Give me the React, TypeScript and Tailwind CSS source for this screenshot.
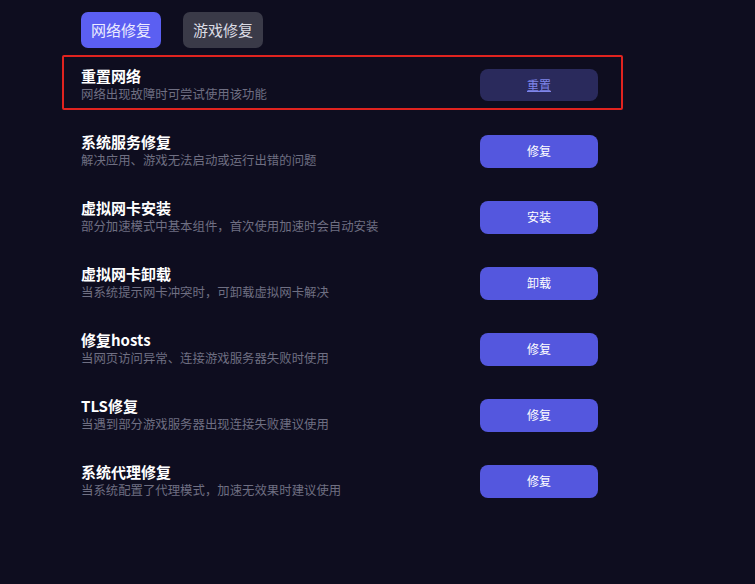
const rows = [
  { title: '重置网络', desc: '网络出现故障时可尝试使用该功能', action: '重置', disabled: true },
  { title: '系统服务修复', desc: '解决应用、游戏无法启动或运行出错的问题', action: '修复' },
  { title: '虚拟网卡安装', desc: '部分加速模式中基本组件，首次使用加速时会自动安装', action: '安装' },
  { title: '虚拟网卡卸载', desc: '当系统提示网卡冲突时，可卸载虚拟网卡解决', action: '卸载' },
  { title: '修复hosts', desc: '当网页访问异常、连接游戏服务器失败时使用', action: '修复' },
  { title: 'TLS修复', desc: '当遇到部分游戏服务器出现连接失败建议使用', action: '修复' },
  { title: '系统代理修复', desc: '当系统配置了代理模式，加速无效果时建议使用', action: '修复' },
]

function RepairRow({ title, desc, action, disabled }: { title: string; desc: string; action: string; disabled?: boolean }) {
  return (
    <div className="relative flex h-[66px] items-center pl-[81px]">
      {disabled && (
        <div className="pointer-events-none absolute left-[62px] top-[3px] h-[55px] w-[561px] rounded-[2px] border-2 border-[#e0231f]" />
      )}
      <div className="flex w-[399px] flex-col pb-[2px]">
        <span className="text-[15px] font-bold leading-[18px] text-white">{title}</span>
        <span className="mt-[1px] text-[12.4px] leading-[16px] text-[#6f6f82]">{desc}</span>
      </div>
      <button
        className={
          disabled
            ? 'h-[32px] w-[118px] rounded-[8px] bg-[#2a2a5c] text-[12px] text-[#7f85ea] underline'
            : 'h-[33px] w-[118px] rounded-[8px] bg-[#5457de] text-[12px] text-white'
        }
      >
        {action}
      </button>
    </div>
  )
}

export default function App() {
  return (
    <div
      className="h-[584px] w-[755px] overflow-hidden bg-[#0e0d1f]"
      style={{ fontFamily: '"Noto Sans CJK SC", "Noto Sans", sans-serif' }}
    >
      <div className="flex gap-[22px] pl-[81px] pt-[12px]">
        <button className="h-[36px] w-[80px] rounded-[7px] bg-[#5b5ff2] text-[15px] text-[#ececff]">网络修复</button>
        <button className="h-[36px] w-[80px] rounded-[7px] bg-[#3a3a48] text-[15px] text-[#dcdce4]">游戏修复</button>
      </div>
      <div className="mt-[4px] flex flex-col">
        {rows.map((r) => (
          <RepairRow key={r.title} {...r} />
        ))}
      </div>
    </div>
  )
}
